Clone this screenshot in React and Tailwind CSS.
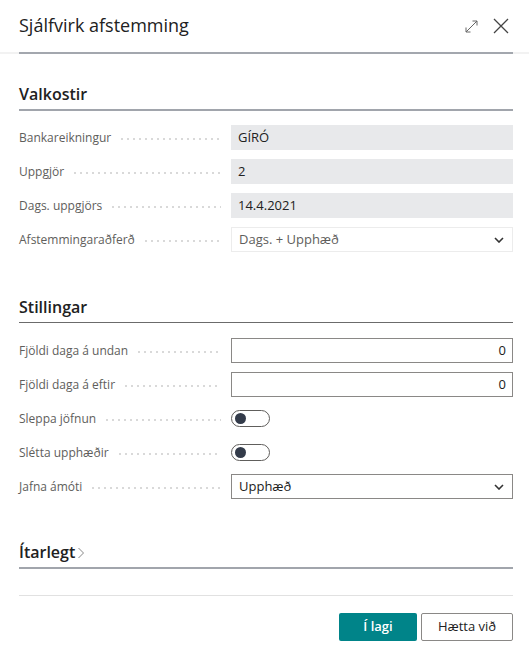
import React from 'react';

const font = { fontFamily: '"Open Sans", "Noto Sans", sans-serif' };

function Leader() {
  return (
    <span className="flex-1 ml-[8px] mr-[10px] h-[2px] self-center mt-[3px] bg-[radial-gradient(circle,#c4c4c4_0.6px,transparent_0.9px)] bg-[length:6px_2px]" />
  );
}

function Row({ label, children }) {
  return (
    <div className="flex items-center h-[25px]">
      <div className="w-[212px] flex items-center text-[12px] text-[#605e5c]">
        <span className="whitespace-nowrap">{label}</span>
        <Leader />
      </div>
      <div className="flex-1">{children}</div>
    </div>
  );
}

function ReadOnly({ value }) {
  return (
    <div className="h-[25px] bg-[#e8e9eb] flex items-center px-[7px] text-[13px] text-[#212121]">{value}</div>
  );
}

function Chevron() {
  return (
    <svg width="10" height="6" viewBox="0 0 10 6" className="ml-auto">
      <path d="M1 1 L5 5 L9 1" fill="none" stroke="#333" strokeWidth="1.6" />
    </svg>
  );
}

function Toggle() {
  return (
    <div className="w-[39px] h-[17px] rounded-full border border-[#605e5c] flex items-center px-[3px]">
      <div className="w-[11px] h-[11px] rounded-full bg-[#333b4a]" />
    </div>
  );
}

function Heading({ children, line }) {
  return (
    <div className={line}>
      <h2 className="text-[16px] font-semibold text-[#212121] leading-[22px] pb-[4px]">{children}</h2>
    </div>
  );
}

export default function App() {
  return (
    <div className="w-[529px] h-[657px] bg-white flex flex-col" style={font}>
      <div className="border-b-2 border-[#f2f2f2]">
        <div className="mx-[19px] mr-[16px] -mb-[2px] h-[54px] flex items-center border-b-2 border-[#a3a7ae]">
          <h1 className="text-[18px] text-[#212121] -mt-[2px]">Sjálfvirk afstemming</h1>
          <div className="ml-auto flex items-center gap-[14px] mr-[4px]">
            <svg width="15" height="15" viewBox="0 0 15 15">
              <path d="M2 13 L13 2 M8.5 2 H13 V6.5 M2 8.5 V13 H6.5" fill="none" stroke="#666" strokeWidth="1" />
            </svg>
            <svg width="16" height="16" viewBox="0 0 16 16">
              <path d="M1 1 L15 15 M15 1 L1 15" fill="none" stroke="#444" strokeWidth="1.3" />
            </svg>
          </div>
        </div>
      </div>

      <div className="pl-[19px] pr-[16px] flex-1 flex flex-col">
        <div className="mt-[29px]">
          <Heading line="border-b-2 border-[#a1a5ac]">Valkostir</Heading>
        </div>
        <div className="mt-[14px] flex flex-col gap-[9px]">
          <Row label="Bankareikningur"><ReadOnly value="GÍRÓ" /></Row>
          <Row label="Uppgjör"><ReadOnly value="2" /></Row>
          <Row label="Dags. uppgjörs"><ReadOnly value="14.4.2021" /></Row>
          <Row label="Afstemmingaraðferð">
            <div className="h-[25px] border border-[#ececec] flex items-center pl-[7px] pr-[8px] text-[13px] text-[#605e5c]">
              Dags. + Upphæð
              <Chevron />
            </div>
          </Row>
        </div>

        <div className="mt-[44px]">
          <Heading line="border-b border-[#6b6b6b]">Stillingar</Heading>
        </div>
        <div className="mt-[15px] flex flex-col gap-[9px]">
          <Row label="Fjöldi daga á undan">
            <div className="h-[25px] border border-[#8a8886] flex items-center justify-end px-[6px] text-[13px] text-[#212121]">0</div>
          </Row>
          <Row label="Fjöldi daga á eftir">
            <div className="h-[25px] border border-[#8a8886] flex items-center justify-end px-[6px] text-[13px] text-[#212121]">0</div>
          </Row>
          <Row label="Sleppa jöfnun"><Toggle /></Row>
          <Row label="Slétta upphæðir"><Toggle /></Row>
          <Row label="Jafna ámóti">
            <div className="h-[25px] border border-[#8a8886] flex items-center pl-[7px] pr-[8px] text-[13px] text-[#212121]">
              Upphæð
              <Chevron />
            </div>
          </Row>
        </div>

        <div className="mt-[42px] border-b-2 border-[#a1a5ac]">
          <h2 className="text-[16px] font-semibold text-[#212121] leading-[22px] pb-[4px] flex items-center">
            Ítarlegt
            <svg width="8" height="12" viewBox="0 0 8 12" className="ml-[2px] mt-[1px]">
              <path d="M1.5 1 L6.5 6 L1.5 11" fill="none" stroke="#888" strokeWidth="1" />
            </svg>
          </h2>
        </div>

        <div className="mt-[26px] border-t border-[#e1e1e1] pt-[17px] flex justify-end gap-[4px]">
          <button className="w-[78px] h-[28px] bg-[#008489] text-white text-[13px] font-semibold rounded-[2px]">Í lagi</button>
          <button className="w-[92px] h-[28px] bg-white border border-[#8a8886] text-[#212121] text-[13px] rounded-[2px]">Hætta við</button>
        </div>
      </div>
    </div>
  );
}
